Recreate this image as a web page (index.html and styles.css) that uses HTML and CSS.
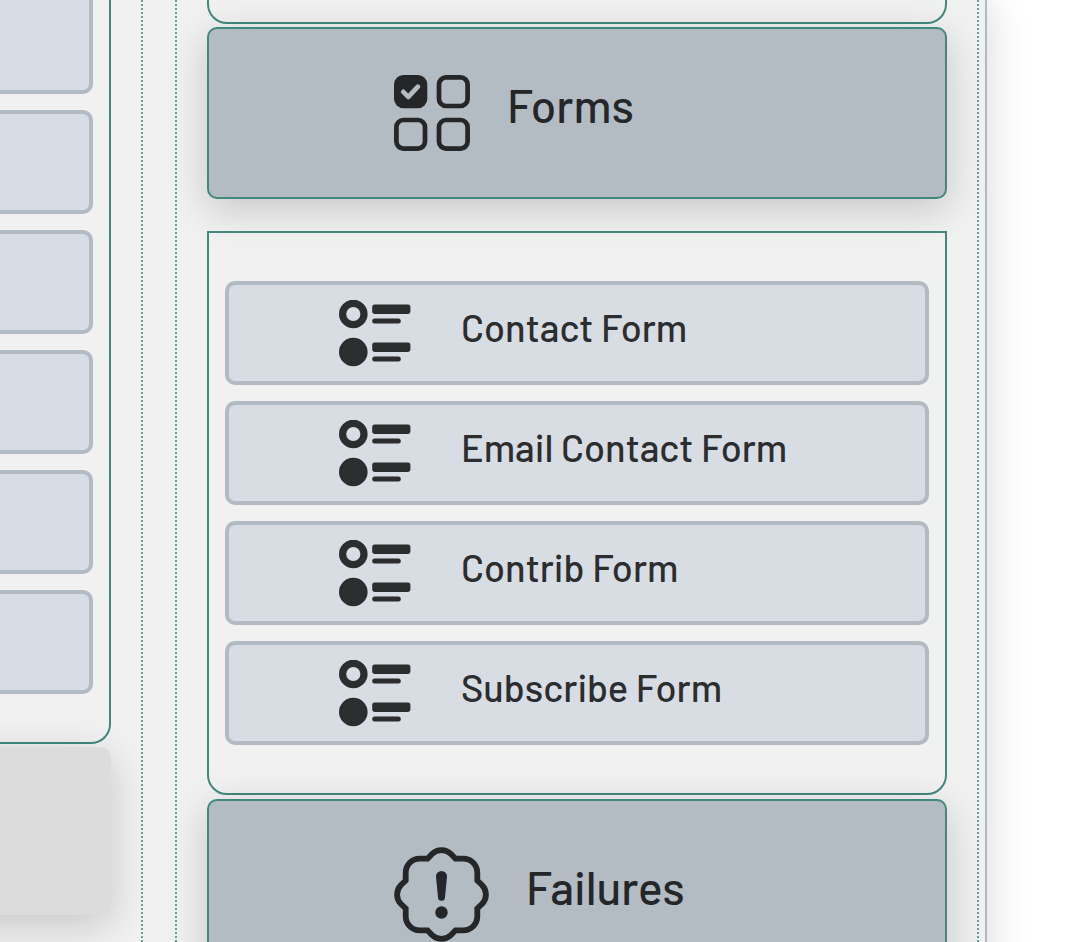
FILE: index.html
```
<!DOCTYPE html>
<html lang="en">
<head>
<meta charset="utf-8">
<title>Forms</title>
<link rel="stylesheet" href="styles.css">
</head>
<body>
<svg class="sprite" aria-hidden="true">
  <symbol id="radios" viewBox="0 0 72 67">
    <circle cx="14.3" cy="14" r="10.7" fill="none" stroke="currentColor" stroke-width="7.2"/>
    <circle cx="14.3" cy="52" r="14.3"/>
    <rect x="33.2" y="4.4" width="38.2" height="9.6" rx="2.4"/>
    <rect x="33.2" y="18.6" width="28.6" height="5" rx="2.5"/>
    <rect x="33.2" y="42.4" width="38.2" height="9.6" rx="2.4"/>
    <rect x="33.2" y="56.6" width="28.6" height="5" rx="2.5"/>
  </symbol>
</svg>
<main class="board">
  <section class="column column-side">
    <div class="panel panel-side">
      <div class="card card-cut"></div>
      <div class="card"></div>
      <div class="card"></div>
      <div class="card"></div>
      <div class="card"></div>
      <div class="card"></div>
    </div>
    <div class="tile"></div>
  </section>
  <section class="column column-main">
    <div class="panel panel-tail"></div>
    <h2 class="header">
      <svg class="header-icon icon-forms" viewBox="0 0 76 76" aria-hidden="true">
        <rect width="33.3" height="33.3" rx="9.5" fill="currentColor"/>
        <path d="M9.3 16.9l5 5 9.6-10.2" fill="none" stroke="#b3bbc3" stroke-width="4.8" stroke-linecap="round" stroke-linejoin="round"/>
        <g fill="none" stroke="currentColor" stroke-width="4.7">
          <rect x="45" y="2.4" width="28.6" height="28.6" rx="7.1"/>
          <rect x="2.4" y="45" width="28.6" height="28.6" rx="7.1"/>
          <rect x="45" y="45" width="28.6" height="28.6" rx="7.1"/>
        </g>
      </svg>
      <span class="label">Forms</span>
    </h2>
    <nav class="panel panel-main">
      <a class="card" href="#contact"><svg class="card-icon" aria-hidden="true"><use href="#radios"/></svg><span class="label">Contact Form</span></a>
      <a class="card" href="#email"><svg class="card-icon" aria-hidden="true"><use href="#radios"/></svg><span class="label">Email Contact Form</span></a>
      <a class="card" href="#contrib"><svg class="card-icon" aria-hidden="true"><use href="#radios"/></svg><span class="label">Contrib Form</span></a>
      <a class="card" href="#subscribe"><svg class="card-icon" aria-hidden="true"><use href="#radios"/></svg><span class="label">Subscribe Form</span></a>
    </nav>
    <h2 class="header">
      <svg class="header-icon icon-failures" viewBox="0 0 95 95" aria-hidden="true">
        <path d="M33.5 11.7l4.5-4.7a13.5 13.5 0 0 1 19 0l4.5 4.7H69.3a14 14 0 0 1 14 14V33.5l4.7 4.5a13.5 13.5 0 0 1 0 19l-4.7 4.5V69.3a14 14 0 0 1-14 14H61.5l-4.5 4.7a13.5 13.5 0 0 1-19 0l-4.5-4.7H25.7a14 14 0 0 1-14-14V61.5l-4.7-4.5a13.5 13.5 0 0 1 0-19l4.7-4.5V25.7a14 14 0 0 1 14-14z" fill="none" stroke="currentColor" stroke-width="5.8"/>
        <path d="M42 29.5a5.5 5.5 0 0 1 11 0l-2 20.7a3.5 3.5 0 0 1-7 0z" fill="currentColor"/>
        <circle cx="47.5" cy="65.5" r="6.2" fill="currentColor"/>
      </svg>
      <span class="label">Failures</span>
    </h2>
  </section>
</main>
</body>
</html>
```
FILE: styles.css
```
:root {
  --steel: #b3bbc3;
  --edge: #b2bbc3;
  --green: #41897d;
  --ink: #242627;
}

* {
  box-sizing: border-box;
}

body {
  margin: 0;
  height: 100vh;
  padding-right: 99px;
  background: #fff;
  color: var(--ink);
  font-family: Barlow, Roboto, sans-serif;
  overflow: hidden;
}

.sprite {
  position: absolute;
  width: 0;
  height: 0;
}

.board {
  display: grid;
  grid-template-columns: 143px 1fr;
  gap: 32px;
  min-height: 100vh;
  padding-right: 6px;
  background: #f1f1f1;
  border-right: 2px solid var(--edge);
  box-shadow: 0 0 40px rgba(0, 0, 0, 0.16);
}

.column {
  border-right: 2px dotted #66a295;
  min-width: 0;
}

.column-side {
  padding-right: 30px;
}

.column-main {
  padding: 0 30px 32px;
  border-left: 2px dotted #66a295;
}

.panel {
  display: flex;
  flex-direction: column;
  gap: 16px;
  border: 2px solid var(--green);
  border-radius: 0 0 20px 20px;
}

.panel-side {
  padding: 0 16px 48px 0;
  border-top: 0;
  border-left: 0;
  border-bottom-left-radius: 0;
}

.panel-tail {
  height: 24px;
  border-top: 0;
}

.panel-main {
  margin-top: 32px;
  padding: 48px 16px;
}

.card {
  display: flex;
  align-items: center;
  gap: 50px;
  height: 104px;
  padding: 0 16px 0 110px;
  background: #d8dce3;
  border: 4px solid var(--edge);
  border-radius: 10px;
  color: #2b2d2e;
  font-size: 38px;
  font-weight: 500;
  line-height: 48px;
  text-decoration: none;
  white-space: nowrap;
}

.panel-side .card {
  padding: 0;
  background: #d8dce4;
  border-left: 0;
  border-radius: 0 10px 10px 0;
}

.panel-side .card-cut {
  height: 94px;
  border-top: 0;
  border-top-right-radius: 0;
}

.card-icon {
  flex: none;
  width: 72px;
  height: 67px;
  fill: currentColor;
}

.label {
  padding-bottom: 12px;
}

.header .label {
  padding-bottom: 16px;
}

.tile {
  height: 168px;
  margin: 3px 0 0 -48px;
  background: #dcdcdc;
  border-radius: 10px;
  box-shadow: 0 10px 40px rgba(0, 0, 0, 0.18);
}

.header {
  display: flex;
  align-items: center;
  gap: 37px;
  margin: 4px 0 0;
  padding: 46px 16px 46px 25%;
  background: var(--steel);
  border: 2px solid var(--green);
  border-radius: 10px;
  box-shadow: 0 10px 40px rgba(0, 0, 0, 0.18);
  font-size: 46px;
  font-weight: 500;
  line-height: 56px;
}

.panel-tail + .header {
  margin-top: 3px;
}

.header-icon {
  flex: none;
}

.icon-forms {
  width: 76px;
  height: 76px;
}

.icon-failures {
  width: 95px;
  height: 95px;
}
```
